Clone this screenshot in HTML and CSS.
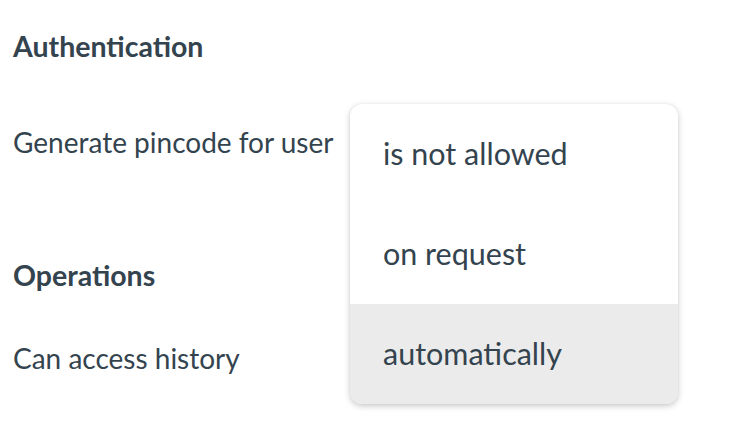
FILE: index.html
```html
<!DOCTYPE html>
<html>
<head>
<meta charset="utf-8">
<link rel="stylesheet" href="styles.css">
</head>
<body>
<div class="page">
  <section class="section">
    <h2 class="section-title">Authentication</h2>
    <div class="setting">Generate pincode for user</div>
  </section>
  <section class="section section-ops">
    <h2 class="section-title">Operations</h2>
    <div class="setting">Can access history</div>
  </section>
  <ul class="menu">
    <li class="menu-item">is not allowed</li>
    <li class="menu-item">on request</li>
    <li class="menu-item menu-item-active">automatically</li>
  </ul>
</div>
</body>
</html>
```

FILE: styles.css
```css
html, body {
  margin: 0;
  padding: 0;
  background: #ffffff;
}
.page {
  position: relative;
  width: 734px;
  height: 424px;
  padding: 26px 0 0 13px;
  box-sizing: border-box;
  font-family: "Lato", "Liberation Sans", sans-serif;
  color: #34444f;
}
.section {
  display: flex;
  flex-direction: column;
}
.section-title {
  margin: 0;
  font-size: 28.5px;
  font-weight: 700;
  line-height: 40px;
}
.setting {
  margin-top: 56px;
  font-size: 28px;
  line-height: 40px;
}
.section-ops {
  margin-top: 93px;
}
.section-ops .setting {
  margin-top: 43px;
}
.menu {
  position: absolute;
  left: 350px;
  top: 104px;
  width: 328px;
  margin: 0;
  padding: 0;
  list-style: none;
  background: #ffffff;
  border-radius: 12px;
  overflow: hidden;
  box-shadow: 0 2px 6px rgba(0, 0, 0, 0.22), 0 0 1px rgba(0, 0, 0, 0.12);
}
.menu-item {
  height: 100px;
  box-sizing: border-box;
  display: flex;
  align-items: center;
  padding: 0 0 3px 33px;
  font-size: 30.5px;
}
.menu-item-active {
  background: #ebebeb;
}
```
